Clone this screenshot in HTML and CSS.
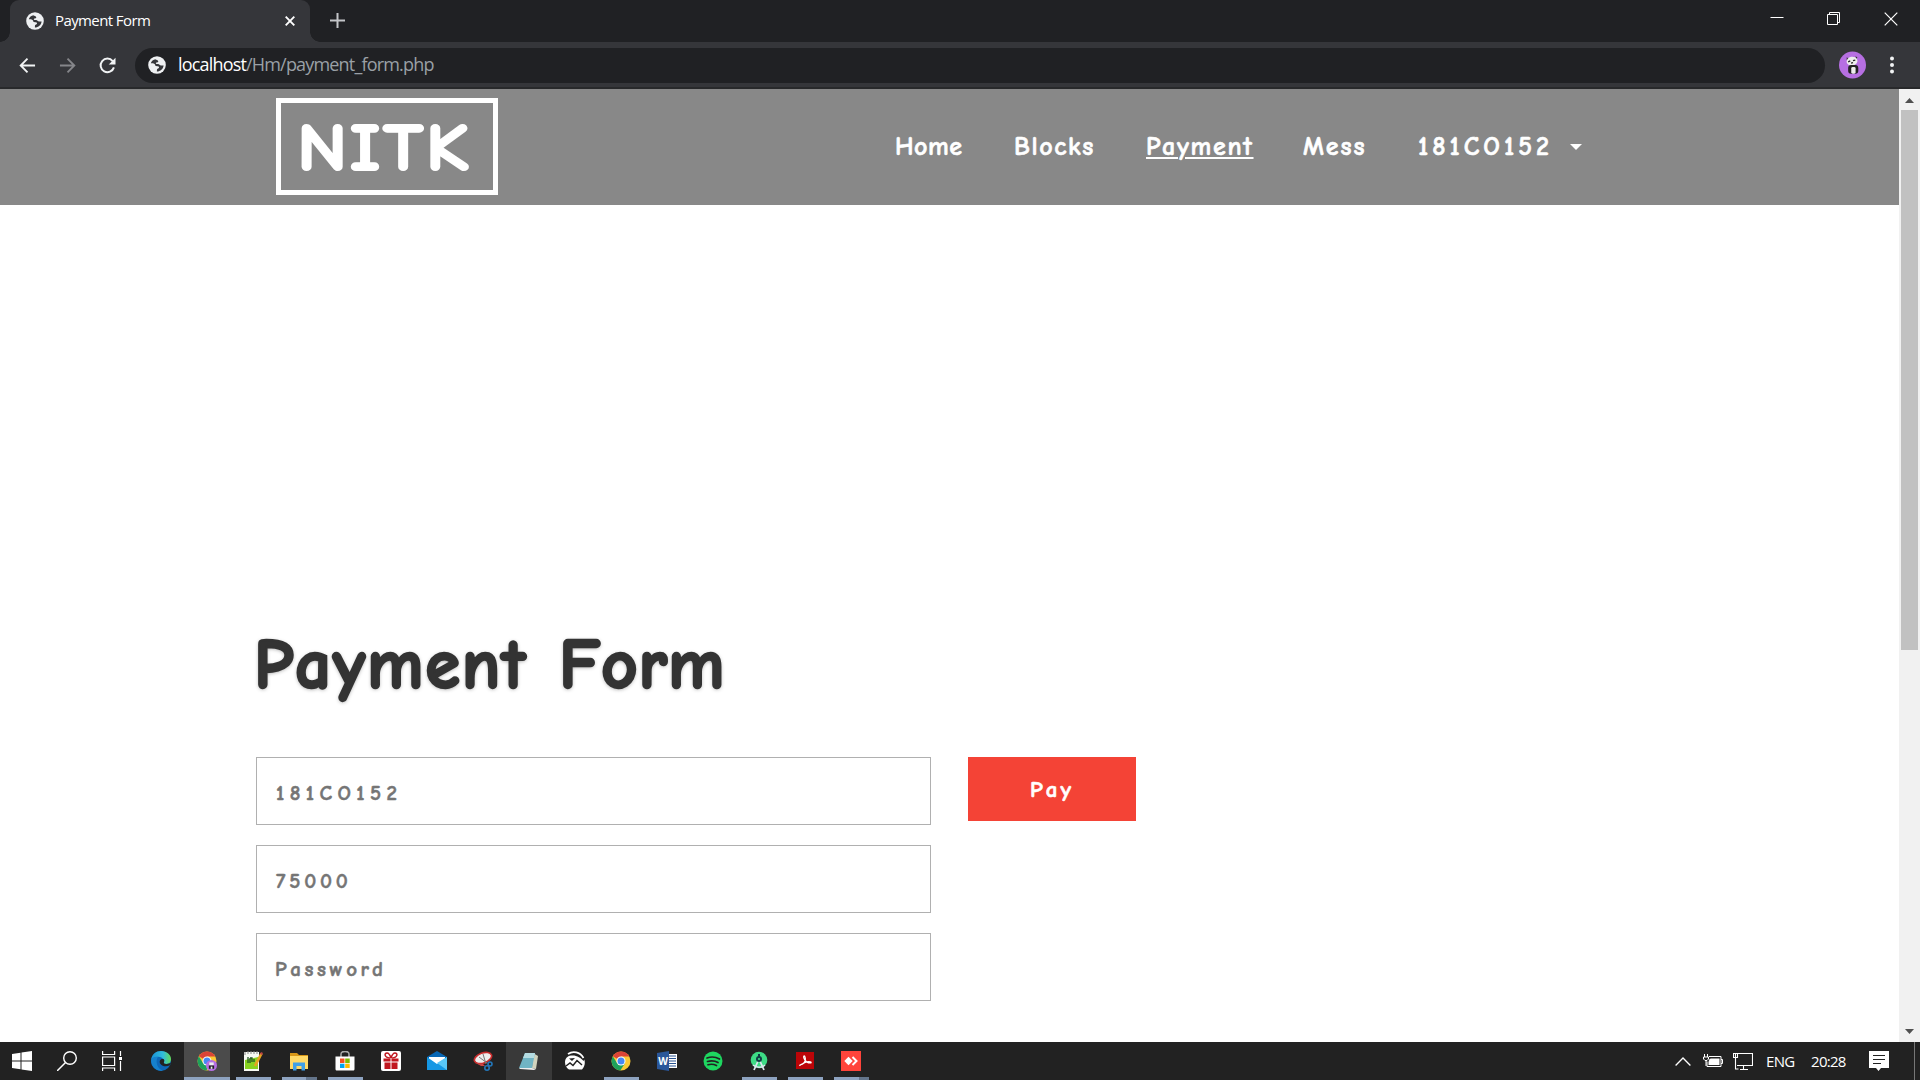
FILE: index.html
```html
<!DOCTYPE html>
<html lang="en">
<head>
<meta charset="utf-8">
<title>Payment Form</title>
<link rel="stylesheet" href="styles.css">
</head>
<body>
<svg width="0" height="0" class="defs" aria-hidden="true">
  <symbol id="globe" viewBox="0 0 18 18"><circle cx="9" cy="9" r="8.800" fill="#eef0f2"/><path d="M7.500 3.300c-2.300.3-4 1.800-4.700 4 1.300.2 2.700 0 3.700.6 1 .7.400 1.800 1.500 2.200 1 .3 2-.3 2.800.6.800 1-.4 1.600-1.300 2.100-.8.500-.5 1.700-.6 2.700 3.500 0 6.300-2.500 6.700-6-1.200-.2-2.200.4-3.300-.2-1-.5-1.600-1.300-2.900-1.200-1 .1-1.800-.2-1.500-1.100.3-.8 1.800-.3 2.300-1.200.3-.6-.2-1.300-.8-1.600-.7-.3-1.300-.2-1.900-.900z" fill="#35363a"/></symbol>
  <symbol id="chrome" viewBox="0 0 20 20"><circle cx="10" cy="10" r="9.500" fill="#fbc934"/><path d="M10 10L1.800 5.200A9.500 9.500 0 0 1 18.300 5.400H10z" fill="#db4437"/><path d="M1.800 5.200A9.500 9.500 0 0 0 9.300 19.500L14 12.300 10 10 6 12z" fill="#1da15b"/><circle cx="10" cy="10" r="4.500" fill="#fff"/><circle cx="10" cy="10" r="3.500" fill="#4688f4"/></symbol>
</svg>

<header class="tabstrip">
  <div class="tab"><svg class="fav"><use href="#globe"/></svg><span class="tab-title">Payment Form</span><svg class="tab-close" viewBox="0 0 10 10"><path d="M.7.7l8.600 8.600M9.300.7L.7 9.300" stroke="#fff" stroke-width="1.900"/></svg></div>
  <svg class="new-tab" viewBox="0 0 15 15"><path d="M7.500 0v15M0 7.500h15" stroke="#c3c5c8" stroke-width="2"/></svg>
  <div class="window-buttons">
    <svg viewBox="0 0 14 14"><path d="M.5 5.500h13" stroke="#fff"/></svg>
    <svg viewBox="0 0 14 14"><path d="M.5 2.500h10v10H.5zM2.500 2V.500h10v10H11" fill="none" stroke="#fff"/></svg>
    <svg viewBox="0 0 14 14"><path d="M.7.7l12.600 12.600M13.300.7L.7 13.300" stroke="#fff" stroke-width="1.200"/></svg>
  </div>
</header>
<div class="toolbar">
  <svg class="nav-icon" viewBox="0 0 18 18"><path d="M17 9H2M9 1.800L1.800 9 9 16.200" fill="none" stroke="#f1f3f4" stroke-width="2"/></svg>
  <svg class="nav-icon" viewBox="0 0 18 18"><path d="M1 9h15M9 1.800L16.200 9 9 16.200" fill="none" stroke="#85868a" stroke-width="2"/></svg>
  <svg class="nav-icon" viewBox="0 0 18 18"><path d="M15.800 11A7.200 7.200 0 1 1 14.500 4.300" fill="none" stroke="#f1f3f4" stroke-width="2.100"/><path d="M17.500.8v7.200h-7.200z" fill="#f1f3f4"/></svg>
  <div class="address"><svg class="fav"><use href="#globe"/></svg><span class="url"><b>localhost</b>/Hm/payment_form.php</span></div>
  <svg class="avatar" viewBox="0 0 28 28"><circle cx="14" cy="14" r="14" fill="#b66fe2"/><path d="M8 6l3 2-3 1zM17 5l2 1-1 3z" fill="#333"/><ellipse cx="13.500" cy="10" rx="5.700" ry="4.600" fill="#eee" transform="rotate(-12 13.500 10)"/><path d="M9.500 10.800l2.200-1M14.500 9.500l2.400-.6M12.500 12l2-.5" stroke="#282828" stroke-width="1.400"/><rect x="9.500" y="14" width="10.500" height="9" rx="3" fill="#222"/><rect x="12.700" y="16" width="4.500" height="7" rx="1.500" fill="#eee"/></svg>
  <svg class="more" viewBox="0 0 4 18"><g fill="#f1f3f4"><circle cx="2" cy="2.500" r="2"/><circle cx="2" cy="9" r="2"/><circle cx="2" cy="15.500" r="2"/></g></svg>
</div>

<div class="viewport">
  <main class="page">
    <div class="site-header">
      <div class="logo"><span class="logo-text">NITK</span></div>
      <nav class="menu">
        <a class="home">Home</a><a class="blocks">Blocks</a><a class="payment">Payment</a><a class="mess">Mess</a><a class="user">181CO152</a><i class="caret"></i>
      </nav>
    </div>
    <section class="content">
      <h1><span class="w1">Payment</span><span class="w2">Form</span></h1>
      <form class="form">
        <div class="fields"><div class="field f1">181CO152</div><div class="field f2">75000</div><div class="field f3">Password</div></div>
        <div class="pay">Pay</div>
      </form>
    </section>
  </main>
  <div class="scrollbar"><svg viewBox="0 0 9 5"><path d="M0 5L4.500 0 9 5z" fill="#505050"/></svg><div class="thumb"></div><svg viewBox="0 0 9 5"><path d="M0 0h9L4.500 5z" fill="#505050"/></svg></div>
</div>

<footer class="taskbar">
  <div class="cell system"><svg viewBox="0 0 20 20"><path d="M0 3l8.500-1.200v7.700H0zM9.500 1.600L20 0v9.500H9.500zM0 10.500h8.500v7.700L0 17zM9.500 10.500H20V20L9.500 18.400z" fill="#fff"/></svg></div>
  <div class="cell system"><svg viewBox="0 0 20 20"><circle cx="13" cy="7" r="6.300" fill="none" stroke="#fff" stroke-width="1.400"/><path d="M8.500 11.500L0 20" stroke="#fff" stroke-width="1.500"/></svg></div>
  <div class="cell taskview"><svg viewBox="0 0 20 20"><path d="M.6 0v3.500h12V0M.6 6h12v8.500H.6zM.6 20v-3h12v3M18.500 0v5M18.500 10v10" fill="none" stroke="#fff" stroke-width="1.200"/><path d="M17 6h3v3h-3z" fill="#fff"/></svg></div>
  <div class="cell"><svg viewBox="0 0 20 20"><defs><linearGradient id="edge"><stop stop-color="#198fd5"/><stop offset=".6" stop-color="#31bddc"/><stop offset="1" stop-color="#64dc58"/></linearGradient></defs><circle cx="10" cy="10" r="10" fill="#0d67b7"/><path d="M0 9C1 3 5 0 10 0c6 0 10 4 10 8 0 5-5 6-7 4.500-1.200-1 .3-1.500 0-3C12 5 4 4 0 9z" fill="url(#edge)"/><path d="M12.500 8c-3-.7-5 2-3 5 2 2.500 6 3 9.500 1.200l1-2.200-2 .5c-3 1-6 .2-5-1.500.6-1 .5-2-.5-3z" fill="#222"/><path d="M7 6c-3 4-1 12 5 13.500C6 21 0 16 0 9c2-3 4-3.500 7-3z" fill="#1681cd"/></svg></div>
  <div class="cell current"><svg><use href="#chrome"/></svg><svg class="badge" viewBox="0 0 10 10"><circle cx="5" cy="5" r="5" fill="#b66fe2"/><path d="M3 2.200h4v2.600H3z" fill="#eee"/><path d="M2.600 5h4.800v3H2.600z" fill="#222"/><path d="M4.300 6h1.500v2H4.300z" fill="#eee"/></svg></div>
  <div class="cell open"><svg viewBox="0 0 20 20"><path d="M1 1h15v19H1z" fill="#f8faf4"/><path d="M2 9l13-3v12H2z" fill="#88d321"/><path d="M2 1v3M5 0v3M8 0v3M11 0v3M14 0v3" stroke="#888"/><path d="M5 6v6M7 7v5M7 7h2v4M11 8v3" fill="none" stroke="#252" stroke-width="1.300"/><path d="M18.500 2.500L12 15" stroke="#e6a322" stroke-width="2.700"/><path d="M18 1l2 1-1 2-2-1z" fill="#b44"/></svg></div>
  <div class="cell open stacked"><svg viewBox="0 0 20 20"><path d="M1 2h7l2 2h9v4H1z" fill="#d89717"/><path d="M1 5h18v13H1z" fill="#ffd967"/><path d="M4 19.500v-8h12v8h-3.500V15h-5v4.500z" fill="#3fa0e8"/></svg></div>
  <div class="cell open"><svg viewBox="0 0 20 20"><path d="M6 7V3c0-3.500 8-3.500 8 0v4" fill="none" stroke="#aaa" stroke-width="1.500"/><path d="M.5 5.500h19V18c0 1-.6 1.500-1.500 1.500H2C1.100 19.500.5 19 .5 18z" fill="#fff"/><path d="M5 7.500h4.500V12H5z" fill="#f25022"/><path d="M10.200 7.500h4.500V12h-4.500z" fill="#7fba00"/><path d="M5 12.700h4.500V17H5z" fill="#00a4ef"/><path d="M10.200 12.700h4.500V17h-4.500z" fill="#ffb900"/></svg></div>
  <div class="cell"><svg viewBox="0 0 20 20"><rect width="20" height="20" rx="2" fill="#fff"/><path d="M2.500 7.500h15v3h-15zM3.500 11.500h13V18h-13z" fill="#c11820"/><path d="M10 7C3 7 3 2 6 2c2 0 3 2 4 5 1-3 2-5 4-5 3 0 3 5-4 5z" fill="none" stroke="#c11820" stroke-width="1.500"/><path d="M10 7v11" stroke="#fff"/></svg></div>
  <div class="cell"><svg viewBox="0 0 20 20"><path d="M0 6l10-6 10 6v6H0z" fill="#0867b5"/><path d="M2 6h16v8H2z" fill="#fff"/><path d="M0 6l10 7 10-7v13H0z" fill="#1597e4"/><path d="M20 6v13L10 12z" fill="#58c7f8"/></svg></div>
  <div class="cell"><svg viewBox="0 0 20 20"><ellipse cx="10" cy="7" rx="9" ry="5" fill="#eee" stroke="#c82d2d" stroke-width="1.700" transform="rotate(-20 10 7)"/><path d="M10 3l3 10M6 6l8 6" stroke="#777"/><path d="M3 12l7 1 2 2-4 0z" fill="#c44"/><g fill="none" stroke="#2377ba" stroke-width="1.600"><circle cx="17" cy="13" r="2"/><circle cx="14" cy="17" r="2.200"/></g></svg></div>
  <div class="cell hover"><svg viewBox="0 0 20 20"><path d="M14 2l5 3-2 13-4-1z" fill="#d1d3bd"/><path d="M6 2h10l-3 15H0z" fill="#70b4c4"/><path d="M6 2h10l-1 5H4z" fill="#b4dce2"/><path d="M0 17h13l4 1-2 1-14-1z" fill="#eee"/></svg></div>
  <div class="cell"><svg viewBox="0 0 20 20"><path d="M3 3C8-.5 15 1 18.500 7" fill="none" stroke="#fff" stroke-width="1.700"/><path d="M0 11c0-3 2-6 6-6.500 5-.7 10 2 12.500 5.500l.8-1.500c1.200 4 .2 7-2.300 10H4c-2.500-1.500-4-4-4-7.500z" fill="#fff"/><path d="M4 7.500l6-.5-3 3z" fill="#222"/><path d="M1 15l4-3 3 2.500 4-5 5 4.500" fill="none" stroke="#222" stroke-width="1.500"/></svg></div>
  <div class="cell open"><svg><use href="#chrome"/></svg></div>
  <div class="cell"><svg viewBox="0 0 20 20"><path d="M9 3h11v14H9z" fill="#fff"/><path d="M12 5h7M12 7.500h7M12 10h7M12 12.500h7M12 15h7" stroke="#295391"/><path d="M0 2l12-2v20L0 18z" fill="#2b579a"/><text x="1.200" y="14" class="word-letter">W</text></svg></div>
  <div class="cell"><svg viewBox="0 0 20 20"><circle cx="10" cy="10" r="9.500" fill="#1ed760"/><path d="M4 7c4-1.500 9-1 12.500 1M4.500 10.500c4-1 7.500-.6 10.500 1M5 13.700c3-.8 6-.5 8.500.9" fill="none" stroke="#222" stroke-width="1.700" stroke-linecap="round"/></svg></div>
  <div class="cell open"><svg viewBox="0 0 20 20"><circle cx="10" cy="9" r="8.300" fill="#3ddb85"/><path d="M10 8L5 19M10 8l5 11" stroke="#dbe7ee" stroke-width="1.800"/><path d="M4 14c3 3 9 3 12 0" fill="none" stroke="#dbe7ee" stroke-width="1.500"/><path d="M9 3h2v3H9z" fill="#113c46"/><circle cx="10" cy="8" r="3" fill="#113c46"/><circle cx="10" cy="8" r="1.100" fill="#3ddb85"/></svg></div>
  <div class="cell open"><svg viewBox="0 0 20 20"><path d="M1 1h18v17H1z" fill="#bc0508"/><path d="M5 14c8-2 5-10 4-9s1 7 6 7c3 0 0-3-6 0-4 2-5 3-4 2z" fill="none" stroke="#fff" stroke-width="1.200"/></svg></div>
  <div class="cell open stacked"><svg viewBox="0 0 20 20"><path d="M0 0h20v20H0z" fill="#ff443b"/><path d="M7.500 5.800l4.200 4.200-4.200 4.200L3.300 10z" fill="#fff"/><path d="M11.500 6l4 4-4 4" fill="none" stroke="#fff" stroke-width="2"/></svg></div>
  <div class="tray">
    <svg class="chev" viewBox="0 0 16 9"><path d="M.6 8.500L8 1l7.400 7.500" fill="none" stroke="#fff" stroke-width="1.300"/></svg>
    <svg class="icon20 battery" viewBox="0 0 20 20"><path d="M6 5.500h12v10H4v-5M18 8.500h1.500v4H18M.5 6h5v2L4 9.500H2L.5 8zM1.500 3v3M4.500 3v3M3 10v5" fill="none" stroke="#fff"/><path d="M6.500 8L8 7.500h8.500V14H5.500V11z" fill="#fff"/></svg>
    <svg class="icon20 network" viewBox="0 0 20 20"><path d="M5 2.500h14.500v12H4M10.500 15v3M7 18.500h8M.5 2.500h4v4h-4zM2.500 3v15h3" fill="none" stroke="#fff" stroke-width="1.100"/></svg>
    <span class="eng">ENG</span><span class="clock">20:28</span>
    <svg class="icon20" viewBox="0 0 20 20"><path d="M0 0h20v17h-8l-2.500 3L7 17H0z" fill="#fff"/><path d="M4 4.500h12M4 8.500h12M4 12.500h8" stroke="#222"/></svg>
    <div class="show-desktop"></div>
  </div>
</footer>
</body>
</html>
```
FILE: styles.css
```css
* { box-sizing: border-box; }
body { margin: 0; width: 1920px; height: 1080px; overflow: hidden; display: flex; flex-direction: column; background: #fff; font-family: "Open Sans", "Noto Sans", sans-serif; }
svg { display: block; flex: none; }
.defs { position: absolute; }
.fav { width: 18px; height: 18px; }

.tabstrip { height: 42px; flex: none; display: flex; align-items: flex-start; padding-left: 10px; background: #202124; }
.tab { position: relative; width: 300px; height: 42px; display: flex; align-items: center; padding: 0 15px 0 16px; background: #35363a; border-radius: 9px 9px 0 0; color: #fff; font-size: 15px; }
.tab::before, .tab::after { content: ""; position: absolute; bottom: 0; width: 10px; height: 10px; }
.tab::before { left: -10px; background: radial-gradient(circle at 0 0, transparent 9.500px, #35363a 10px); }
.tab::after { right: -10px; background: radial-gradient(circle at 100% 0, transparent 9.500px, #35363a 10px); }
.tab-title { margin: -2px 0 0 11px; flex: 1; letter-spacing: -0.6px; }
.tab-close { width: 10px; height: 10px; }
.new-tab { width: 15px; height: 15px; margin: 13px 0 0 20px; }
.window-buttons { margin: 12px 22px 0 auto; display: flex; gap: 43px; }
.window-buttons svg { width: 14px; height: 14px; }

.toolbar { height: 47px; flex: none; display: flex; align-items: center; padding: 1px 26px 0 19px; background: #35363a; border-bottom: 2px solid #28292b; }
.nav-icon { width: 17px; height: 17px; margin-right: 23px; }
.address { flex: 1; margin-right: 14px; height: 35px; margin-left: -4px; display: flex; align-items: center; padding-left: 13px; border-radius: 18px; background: #202124; }
.url { margin: -2px 0 0 12px; font-size: 18px; color: #9aa0a6; letter-spacing: -0.82px; }
.url b { font-weight: 400; color: #fff; }
.avatar { width: 27px; height: 28px; margin-right: 24px; }
.more { width: 4px; height: 18px; }

.viewport { height: 953px; flex: none; display: flex; }
.page { flex: 1; font-family: "Comic Sans MS", "Comic Neue", Lato, sans-serif; font-weight: 700; }
.site-header { height: 116px; display: flex; background: #888; padding: 9px 0 0 276px; color: #fff; }
.logo { width: 222px; height: 97px; border: 5px solid #fff; padding-left: 16px; font-size: 67px; line-height: 92px; letter-spacing: 2px; -webkit-text-stroke: 2px currentColor; }
.logo-text { display: inline-block; transform: scaleX(1.150); transform-origin: left center; }
.menu { margin-left: 397px; height: 97px; display: flex; align-items: center; font-size: 26px; letter-spacing: 1.800px; white-space: nowrap; -webkit-text-stroke: .6px currentColor; }
.menu a { flex: none; }
.home { width: 119px; letter-spacing: .5px; }
.blocks { width: 132px; letter-spacing: 1.600px; }
.payment { width: 157px; letter-spacing: 1.700px; text-decoration: underline; text-decoration-thickness: 2px; text-underline-offset: 2px; }
.mess { width: 115px; letter-spacing: 1.900px; }
.user { width: 152px; letter-spacing: 4px; }
.caret { border: 6px solid transparent; border-top-color: #fff; border-bottom: 0; }

.content { padding: 410px 0 0 254px; }
h1 { margin: 0; height: 142px; display: flex; font-size: 71px; line-height: 100px; color: #333; letter-spacing: 1.700px; text-shadow: 0 1px 4px rgba(0, 0, 0, .45); -webkit-text-stroke: 2.400px currentColor; }
.w1 { width: 305px; }
.w2 { letter-spacing: .8px; }
.form { display: flex; gap: 37px; margin-left: 2px; }
.fields { display: flex; flex-direction: column; gap: 20px; }
.field { width: 675px; height: 68px; border: 1px solid #b0b0b0; padding-left: 19px; font-size: 21px; line-height: 70px; color: #757575; letter-spacing: 3.600px; -webkit-text-stroke: .5px currentColor; }
.f1 { letter-spacing: 5.400px; }
.f2 { letter-spacing: 3.800px; }
.f3 { padding-left: 18px; }
.pay { width: 168px; height: 64px; background: #f44336; color: #fff; font-size: 23px; line-height: 66px; text-align: center; letter-spacing: 3px; -webkit-text-stroke: .6px currentColor; }

.scrollbar { width: 21px; background: #f1f1f1; display: flex; flex-direction: column; align-items: center; padding: 9px 0 8px; }
.scrollbar svg { width: 9px; height: 5px; }
.scrollbar .thumb { width: 17px; height: 540px; margin: 7px 0 auto; background: #c1c1c1; }

.taskbar { height: 38px; flex: none; display: flex; background: #222; color: #fff; }
.cell { position: relative; width: 46px; height: 38px; flex: none; display: flex; align-items: center; justify-content: center; }
.cell > svg { width: 20px; height: 20px; }
.system { width: 45px; padding-right: 2px; }
.taskview { width: 48px; padding-right: 4px; }
.current { background: #4b4b4b; }
.hover { background: #393939; }
.open::after, .current::after { content: ""; position: absolute; left: 6px; bottom: 0; width: 35px; height: 3px; background: #8ea3c0; }
.current::after { left: 0; width: 46px; }
.stacked::after { background: linear-gradient(90deg, #8ea3c0 70%, #64758b 70%); }
.cell .badge { position: absolute; width: 11px; height: 11px; left: 22px; top: 18px; }
.word-letter { font: 700 10px "Open Sans", sans-serif; fill: #fff; }
.tray { margin-left: auto; display: flex; align-items: center; font-size: 15px; }
.chev { width: 16px; height: 9px; margin-right: 12px; }
.icon20 { width: 20px; height: 20px; }
.battery { margin-right: 10px; }
.eng { width: 45px; margin-left: 13px; letter-spacing: -.7px; }
.clock { width: 58px; letter-spacing: -.7px; }
.show-desktop { width: 6px; height: 38px; margin-left: 25px; border-left: 1px solid #777; }
```
